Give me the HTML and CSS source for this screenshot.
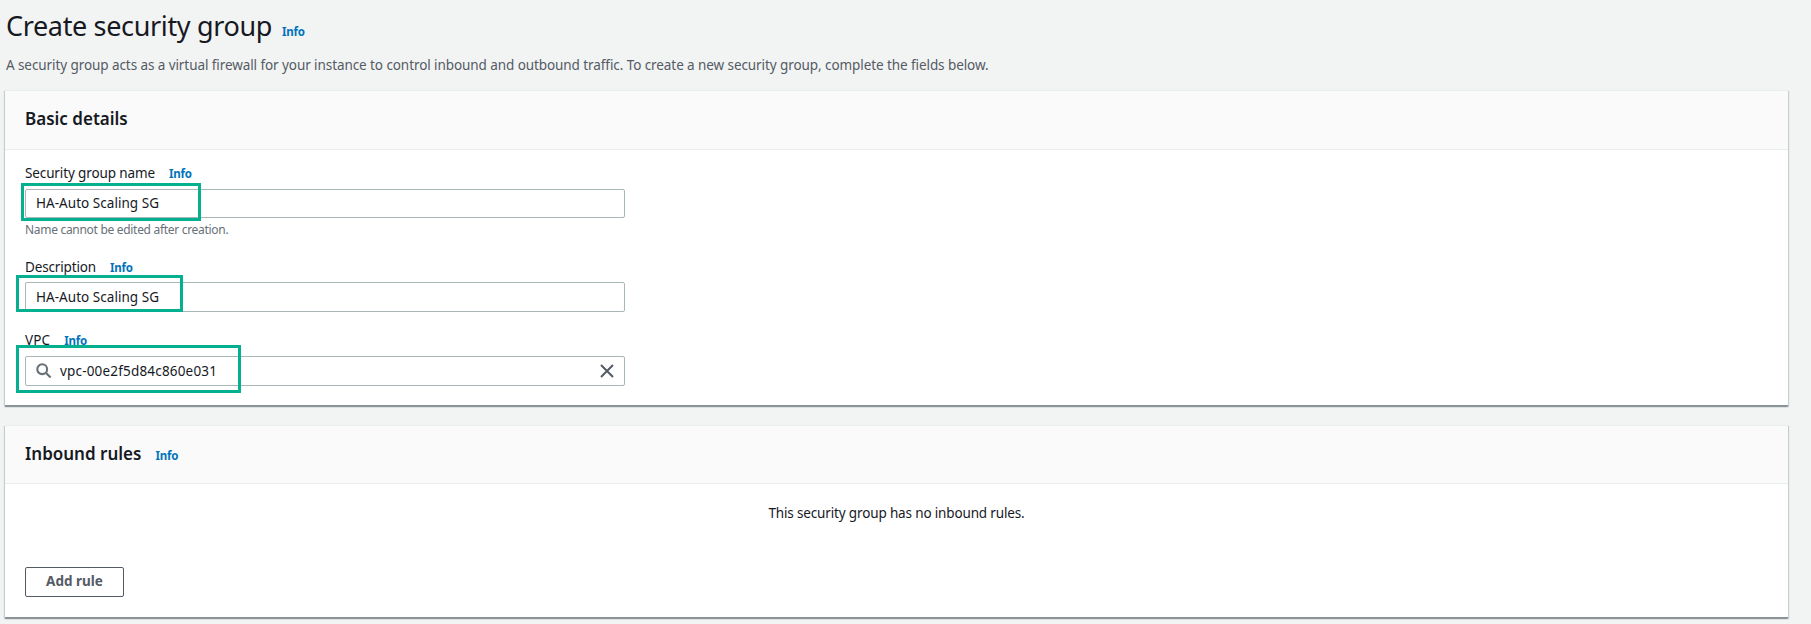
FILE: index.html
```html
<!DOCTYPE html>
<html lang="en">
<head>
<meta charset="utf-8">
<title>Create security group</title>
<link rel="stylesheet" href="styles.css">
</head>
<body>
<main class="page">
  <header class="page-head">
    <h1 class="title"><span class="t-title">Create security group</span><a class="info info-title">Info</a></h1>
    <p class="intro">A security group acts as a virtual firewall for your instance to control inbound and outbound traffic. To create a new security group, complete the fields below.</p>
  </header>

  <section class="card card-details">
    <div class="card-head"><h2 class="card-title">Basic details</h2></div>
    <div class="card-body form">
      <div class="field field-name">
        <div class="label"><span class="t-name">Security group name</span><a class="info">Info</a></div>
        <div class="input input-name"><span class="value">HA-Auto Scaling SG</span><i class="mark mark-name"></i></div>
        <div class="hint">Name cannot be edited after creation.</div>
      </div>
      <div class="field field-desc">
        <div class="label"><span class="t-desc">Description</span><a class="info">Info</a></div>
        <div class="input"><span class="value">HA-Auto Scaling SG</span><i class="mark mark-desc"></i></div>
      </div>
      <div class="field">
        <div class="label"><span class="t-vpc">VPC</span><a class="info">Info</a></div>
        <div class="input input-search">
          <svg class="search" viewBox="0 0 16 16"><circle cx="6.2" cy="6.2" r="4.9"/><path d="M9.8 9.8 14.6 14.6"/></svg>
          <span class="value-vpc">vpc-00e2f5d84c860e031</span>
          <svg class="clear" viewBox="0 0 14 14"><path d="M1 1 13 13M13 1 1 13"/></svg>
          <i class="mark mark-vpc"></i>
        </div>
      </div>
    </div>
  </section>

  <section class="card card-rules">
    <div class="card-head"><h2 class="card-title">Inbound rules</h2><a class="info">Info</a></div>
    <div class="card-body rules">
      <p class="empty">This security group has no inbound rules.</p>
      <button class="button" type="button">Add rule</button>
    </div>
  </section>
</main>
</body>
</html>
```
FILE: styles.css
```css
* { box-sizing: border-box; }
body {
  margin: 0;
  background: #f2f3f3;
  color: #16191f;
  font-family: "Noto Sans", "Open Sans", sans-serif;
  font-size: 13.5px;
  line-height: 20px;
}
h1, h2, p { margin: 0; font-weight: 400; }
.page { height: 624px; overflow: hidden; padding: 0 23px 0 5px; }
.page-head { height: 91px; padding-left: 1px; }
.title { display: flex; align-items: baseline; font-size: 27px; line-height: 51px; }
.t-title { letter-spacing: -.35px; }
.intro { color: #545b64; line-height: 28px; letter-spacing: -.08px; white-space: nowrap; }
.info { color: #0073bb; font-size: 11.5px; font-weight: 700; line-height: 16px; letter-spacing: -.2px; margin-left: 14px; }
.info-title { margin-left: 10px; }

.card {
  background: #fff;
  border-top: 1px solid #eaeded;
  box-shadow: 0 1px 1px 0 rgba(0, 28, 36, .2), 1px 1px 1px 0 rgba(0, 28, 36, .15), -1px 1px 1px 0 rgba(0, 28, 36, .15);
  border-bottom: 1px solid #879196;
  margin-top: -1px;
}
.card-details { height: 316px; }
.card-rules { height: 193px; margin-top: 19px; }
.card-head {
  display: flex;
  align-items: baseline;
  height: 59px;
  padding: 0 20px;
  border-bottom: 1px solid #eaeded;
  background: #fafafa;
}
.card-rules .card-head { height: 58px; }
.card-title { font-size: 17px; font-weight: 600; line-height: 55px; }

.form { padding: 13px 20px 0; }
.field { width: 600px; height: 73px; }
.field-name { height: 94px; }
.label { display: flex; align-items: baseline; height: 26px; }
.field-desc .label { height: 25px; }
.t-name { letter-spacing: -.12px; }
.t-desc { letter-spacing: -.15px; }
.t-vpc { letter-spacing: .15px; }
.input {
  position: relative;
  display: flex;
  align-items: center;
  height: 30px;
  padding: 0 10px 1px;
  border: 1px solid #aab7b8;
  border-radius: 2px;
  background: #fff;
}
.input-name { height: 29px; }
.value { letter-spacing: .04px; }
.value-vpc { letter-spacing: .18px; }
.hint { color: #687078; font-size: 12px; line-height: 18px; letter-spacing: -.3px; margin-top: 3px; }
.search { width: 16px; height: 16px; fill: none; stroke: #687078; stroke-width: 2.1; margin-right: 8px; }
.clear { width: 14px; height: 14px; fill: none; stroke: #545b64; stroke-width: 2; margin-left: auto; }

.mark { position: absolute; border: 3px solid #05b091; }
.mark-name { left: -5px; top: -7px; width: 180px; height: 38px; }
.mark-desc { left: -10px; top: -8px; width: 167px; height: 37px; }
.mark-vpc { left: -10px; top: -12px; width: 225px; height: 48px; }

.rules { display: flex; flex-direction: column; align-items: flex-start; justify-content: space-between; height: 113px; padding: 19px 20px 0; }
.empty { align-self: stretch; text-align: center; letter-spacing: -.15px; }
.button {
  width: 99px;
  height: 30px;
  padding: 0 0 2px;
  border: 1px solid #545b64;
  border-radius: 2px;
  background: #fff;
  color: #545b64;
  font: 700 13.5px/20px "Noto Sans", "Open Sans", sans-serif;
}
```
